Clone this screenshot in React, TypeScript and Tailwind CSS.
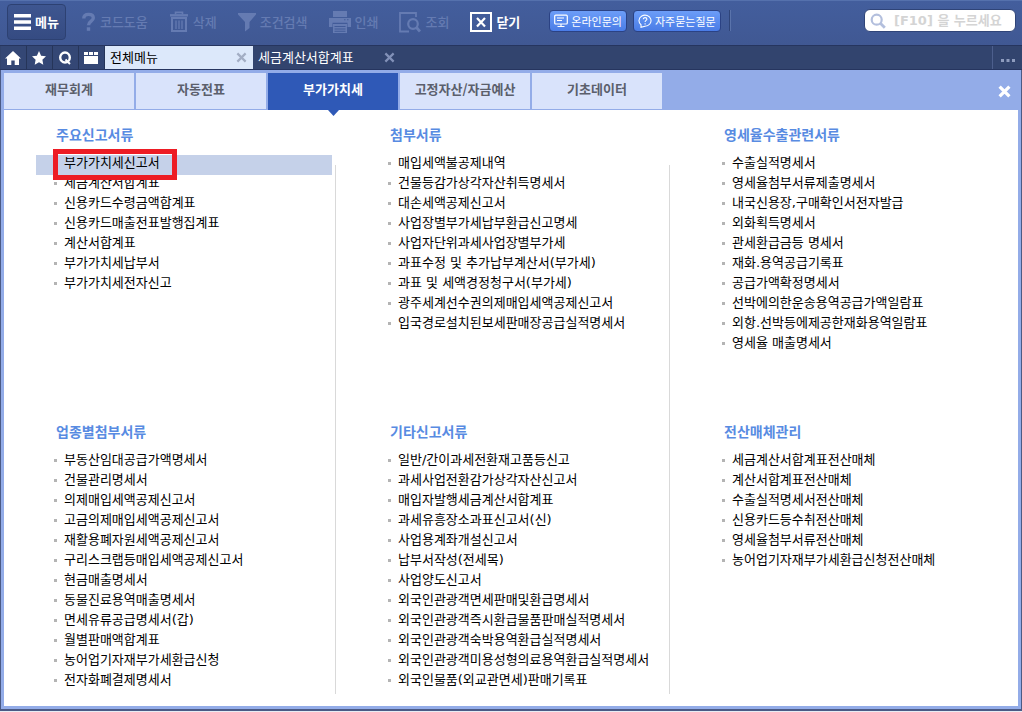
import { ReactNode } from "react";

type MenuSection = { title: string; items: string[] };

const upper: MenuSection[] = [
  {
    title: "주요신고서류",
    items: [
      "부가가치세신고서",
      "세금계산서합계표",
      "신용카드수령금액합계표",
      "신용카드매출전표발행집계표",
      "계산서합계표",
      "부가가치세납부서",
      "부가가치세전자신고",
    ],
  },
  {
    title: "첨부서류",
    items: [
      "매입세액불공제내역",
      "건물등감가상각자산취득명세서",
      "대손세액공제신고서",
      "사업장별부가세납부환급신고명세",
      "사업자단위과세사업장별부가세",
      "과표수정 및 추가납부계산서(부가세)",
      "과표 및 세액경정청구서(부가세)",
      "광주세계선수권의제매입세액공제신고서",
      "입국경로설치된보세판매장공급실적명세서",
    ],
  },
  {
    title: "영세율수출관련서류",
    items: [
      "수출실적명세서",
      "영세율첨부서류제출명세서",
      "내국신용장,구매확인서전자발급",
      "외화획득명세서",
      "관세환급금등 명세서",
      "재화.용역공급기록표",
      "공급가액확정명세서",
      "선박에의한운송용역공급가액일람표",
      "외항.선박등에제공한재화용역일람표",
      "영세율 매출명세서",
    ],
  },
];

const lower: MenuSection[] = [
  {
    title: "업종별첨부서류",
    items: [
      "부동산임대공급가액명세서",
      "건물관리명세서",
      "의제매입세액공제신고서",
      "고금의제매입세액공제신고서",
      "재활용폐자원세액공제신고서",
      "구리스크랩등매입세액공제신고서",
      "현금매출명세서",
      "동물진료용역매출명세서",
      "면세유류공급명세서(갑)",
      "월별판매액합계표",
      "농어업기자재부가세환급신청",
      "전자화폐결제명세서",
    ],
  },
  {
    title: "기타신고서류",
    items: [
      "일반/간이과세전환재고품등신고",
      "과세사업전환감가상각자산신고서",
      "매입자발행세금계산서합계표",
      "과세유흥장소과표신고서(신)",
      "사업용계좌개설신고서",
      "납부서작성(전세목)",
      "사업양도신고서",
      "외국인관광객면세판매및환급명세서",
      "외국인관광객즉시환급물품판매실적명세서",
      "외국인관광객숙박용역환급실적명세서",
      "외국인관광객미용성형의료용역환급실적명세서",
      "외국인물품(외교관면세)판매기록표",
    ],
  },
  {
    title: "전산매체관리",
    items: [
      "세금계산서합계표전산매체",
      "계산서합계표전산매체",
      "수출실적명세서전산매체",
      "신용카드등수취전산매체",
      "영세율첨부서류전산매체",
      "농어업기자재부가세환급신청전산매체",
    ],
  },
];

const categories = ["재무회계", "자동전표", "부가가치세", "고정자산/자금예산", "기초데이터"];
const ACTIVE_CATEGORY = "부가가치세";

function CrossIcon({ className, size, stroke }: { className: string; size: number; stroke: number }) {
  return (
    <svg width={size} height={size} viewBox="0 0 12 12" className={className} fill="none" stroke="currentColor" strokeWidth={stroke}>
      <path d="M1.5 1.5 10.5 10.5M10.5 1.5 1.5 10.5" />
    </svg>
  );
}

function HelpIcon() {
  return (
    <svg width="14" height="20" viewBox="0 0 14 20" fill="none" stroke="currentColor" strokeWidth="3.4">
      <path d="M1.800 6.500C1.800 3.400 4 2.400 6.700 2.400c3 0 4.600 1.300 4.600 3.600C11.300 9.200 6.500 9 6.500 13.300" />
      <path d="M6.500 15.300v3.500" />
    </svg>
  );
}

function TrashIcon() {
  return (
    <svg width="20" height="22" viewBox="0 0 20 22" fill="none" stroke="currentColor">
      <path d="M1 4.300h18" strokeWidth="2.400" />
      <path d="M6.500 3.300V1.400h7v2" strokeWidth="1.600" />
      <path d="M3 7v13h14V7z" strokeWidth="2" />
      <path d="M7 9.500v8.500M10 9.500v8.500M13 9.500v8.500" strokeWidth="1.300" />
    </svg>
  );
}

function FilterIcon() {
  return (
    <svg width="18" height="19" viewBox="0 0 18 19" fill="currentColor">
      <path d="M0 0h18v1.500L11.500 9v6L7 18.500V9L0 1.500z" />
    </svg>
  );
}

function PrintIcon() {
  return (
    <svg width="22" height="22" viewBox="0 0 22 22" fill="currentColor">
      <path d="M4 0h14v6H4z" />
      <path d="M0 7h22v9h-3.500v-4.300h-15V16H0zm15 1.300v1h1.500v-1zm3 0v1h1.500v-1z" fillRule="evenodd" />
      <path d="M4 13h14v9H4zm1.500 2v1h11v-1zm0 2.500v1h11v-1zm0 2.300v.9h11v-.9z" fillRule="evenodd" />
    </svg>
  );
}

function LookupIcon() {
  return (
    <svg width="22" height="21" viewBox="0 0 22 21" fill="none" stroke="currentColor">
      <path d="M17 5V1H1v18.500h9" strokeWidth="1.800" />
      <circle cx="14" cy="12" r="4.800" strokeWidth="2.200" />
      <path d="m17.500 15.500 3.500 4" strokeWidth="2.800" />
    </svg>
  );
}

function CloseBoxIcon() {
  return (
    <svg width="22" height="20" viewBox="0 0 22 20" fill="none" stroke="currentColor" strokeWidth="2">
      <path d="M1 1h20v18H1z" />
      <path d="m7 6 8 8.500M15 6l-8 8.500" strokeWidth="2.200" />
    </svg>
  );
}

function ToolButton({ icon, label, enabled }: { icon: ReactNode; label: string; enabled?: boolean }) {
  return (
    <button
      type="button"
      disabled={!enabled}
      className={
        enabled
          ? "flex h-9 items-center gap-1 font-bold text-white"
          : "flex h-9 items-center gap-1 font-medium text-[#657bb2]"
      }
    >
      {icon}
      {label}
    </button>
  );
}

function PillButton({ icon, label }: { icon: ReactNode; label: string }) {
  return (
    <button
      type="button"
      className="flex h-[22px] items-center gap-[3px] rounded border border-[#2b4284] bg-linear-to-b from-[#6c9df8] to-[#4a7ce6] px-1 text-[11px] leading-5 text-white"
    >
      {icon}
      {label}
    </button>
  );
}

function Toolbar() {
  return (
    <header className="flex h-[45px] items-start border-t border-[#5571ad] bg-linear-to-b from-[#435e9d] to-[#405893] pt-[3px] pr-[6px] pl-[7px] text-[13px]">
      <button
        type="button"
        className="flex h-9 items-center gap-1 rounded border border-[#2d4172] bg-linear-to-b from-[#3e5690] to-[#354b82] px-[6px] font-bold text-white"
      >
        <svg width="17" height="16" viewBox="0 0 17 16" fill="currentColor">
          <path d="M0 0h17v3.500H0zM0 6.200h17v3.500H0zM0 12.400h17v3.500H0z" />
        </svg>
        메뉴
      </button>
      <div className="ml-4 flex gap-[21px]">
        <ToolButton icon={<HelpIcon />} label="코드도움" />
        <ToolButton icon={<TrashIcon />} label="삭제" />
        <ToolButton icon={<FilterIcon />} label="조건검색" />
        <ToolButton icon={<PrintIcon />} label="인쇄" />
        <ToolButton icon={<LookupIcon />} label="조회" />
        <ToolButton icon={<CloseBoxIcon />} label="닫기" enabled />
      </div>
      <div className="mt-[6px] ml-[29px] flex gap-[6px]">
        <PillButton
          label="온라인문의"
          icon={
            <svg width="14" height="14" viewBox="0 0 14 14" fill="none" stroke="currentColor" strokeWidth="1.200">
              <rect x="0.700" y="1.200" width="12.600" height="8.800" rx="1" />
              <path d="M3 4h7M3 6.500h5M7 10v2M3.500 12.500h7" />
            </svg>
          }
        />
        <PillButton
          label="자주묻는질문"
          icon={
            <svg width="14" height="14" viewBox="0 0 14 14" fill="none" stroke="currentColor" strokeWidth="1.100">
              <path d="M3 10.800A6 5.500 0 1 1 7 12.200L3 13.300z" />
              <path d="M5.300 5.200c0-2.200 3.600-2.100 3.600 0C8.900 6.400 7.100 6.500 7.100 8M7.100 9.200v1.200" />
            </svg>
          }
        />
        <div className="ml-[2px] h-[21px] w-[2px] border-l border-[#2f4478] bg-[#5a73ab]" />
      </div>
      <label className="mt-[5px] ml-auto flex h-[23px] w-[152px] items-center gap-2 rounded-md border border-[#2f4478] bg-white pl-[5px] text-[#b3bfdd]">
        <svg width="16" height="16" viewBox="0 0 16 16" className="shrink-0" fill="none" stroke="currentColor" strokeWidth="2.200">
          <circle cx="6.700" cy="6.700" r="5" />
          <path d="m10.300 10.300 4.500 4.500" strokeWidth="2.800" />
        </svg>
        <input
          type="search"
          aria-label="검색"
          placeholder="[F10] 을 누르세요"
          className="w-full min-w-0 bg-transparent font-['DejaVu_Sans','Noto_Sans_CJK_KR',sans-serif] text-[13px] font-bold text-gray-700 outline-none placeholder:text-[#d4d4d4]"
        />
      </label>
    </header>
  );
}

function IconCell({ label, children }: { label: string; children: ReactNode }) {
  return (
    <button
      type="button"
      aria-label={label}
      className="flex w-[26px] items-center justify-center border-r border-[#263559] bg-[#344775] pr-px text-white"
    >
      {children}
    </button>
  );
}

function WindowTabs() {
  return (
    <nav className="flex h-[25px] border-t border-b border-[#26355f] bg-[#32446e] pl-px text-[13px]">
      <IconCell label="홈">
        <svg width="16" height="14" viewBox="0 0 16 14" fill="currentColor">
          <path d="M8 0 16 7.500h-2V14H9.700V9.500H6.300V14H2V7.500H0z" />
        </svg>
      </IconCell>
      <IconCell label="즐겨찾기">
        <svg width="14" height="14" viewBox="0 0 14 14" fill="currentColor">
          <path d="m7 0 2.100 4.700 4.900.6-3.600 3.400.9 5L7 11.200l-4.300 2.500.9-5L0 5.300l4.900-.6z" />
        </svg>
      </IconCell>
      <IconCell label="검색">
        <svg width="14" height="14" viewBox="0 0 14 14" fill="none" stroke="currentColor" strokeWidth="2.400">
          <ellipse cx="7" cy="6.500" rx="4.800" ry="5" />
          <path d="m7.500 8.500 4.500 4.500" strokeWidth="2" />
        </svg>
      </IconCell>
      <IconCell label="달력">
        <svg width="14" height="12" viewBox="0 0 14 12" fill="currentColor">
          <path d="M0 0h4v3H0zM5 0h4v3H5zM10 0h4v3h-4zM0 4h14v8H0z" />
        </svg>
      </IconCell>
      <div className="flex w-[148px] items-center justify-between bg-[#dce8fa] pr-[6px] pb-px pl-[5px] text-black">
        <a href="#all">전체메뉴</a>
        <button type="button" aria-label="전체메뉴 닫기" className="pt-px">
          <CrossIcon size={11} stroke={2.4} className="text-[#a3aec4]" />
        </button>
      </div>
      <div className="flex w-[148px] items-center justify-between pr-[6px] pb-px pl-[5px] text-white">
        <a href="#tax-invoice">세금계산서합계표</a>
        <button type="button" aria-label="세금계산서합계표 닫기" className="pt-px">
          <CrossIcon size={11} stroke={2.4} className="text-[#8291b8]" />
        </button>
      </div>
      <button
        type="button"
        aria-label="더보기"
        className="ml-auto flex w-[30px] items-center justify-center border-l border-[#4d5f8d] pt-[6px] text-[#8e9cbe]"
      >
        <svg width="14" height="3" viewBox="0 0 14 3" fill="currentColor">
          <path d="M0 0h3v3H0zM5.500 0h3v3h-3zM11 0h3v3h-3z" />
        </svg>
      </button>
    </nav>
  );
}

function CategoryTabs() {
  return (
    <div className="flex h-10 items-stretch justify-between bg-[#93ace8] pt-[3px]">
      <ul className="flex gap-[2px] text-[13px] font-bold">
        {categories.map((name) =>
          name === ACTIVE_CATEGORY ? (
            <li key={name} className="relative flex w-[130px] bg-[#2f59b7] text-white">
              <button type="button" className="w-full pb-[5px]">
                {name}
              </button>
              <svg width="11" height="6" viewBox="0 0 11 6" className="absolute top-full left-[60px]" fill="#2f59b7">
                <path d="M0 0h11L5.500 6z" />
              </svg>
            </li>
          ) : (
            <li key={name} className="mb-px flex w-[130px] bg-[#d9e3fb] text-[#5b5f6c]">
              <button type="button" className="w-full pb-1">
                {name}
              </button>
            </li>
          ),
        )}
      </ul>
      <button type="button" aria-label="메뉴 닫기" className="mr-[7px]">
        <CrossIcon size={13} stroke={3} className="text-white" />
      </button>
    </div>
  );
}

function Section({ section, selected, first }: { section: MenuSection; selected?: string; first?: boolean }) {
  return (
    <section className={first ? "pl-8" : "pl-[34px]"}>
      <h2 className="pl-5 text-[14px] leading-5 font-bold text-[#588be2]">{section.title}</h2>
      <ul className="mt-[11px] mr-[3px] font-['DejaVu_Sans','Noto_Sans_CJK_KR',sans-serif] text-[13px] leading-4 text-black">
        {section.items.map((item) => (
          <li
            key={item}
            className={
              item === selected
                ? "relative flex h-5 items-start bg-[#c5d1e9] pl-[18px]"
                : "relative flex h-5 items-start pl-[18px]"
            }
          >
            <span className="mt-[7px] mr-[7px] size-[3px] shrink-0 bg-[#b4b4b4]" />
            <a href="#item" className="whitespace-nowrap">
              {item}
            </a>
            {item === selected && (
              <span className="pointer-events-none absolute -top-[6px] left-[17px] z-10 h-[31px] w-[124px] border-5 border-[#ed1c24]" />
            )}
          </li>
        ))}
      </ul>
    </section>
  );
}

function Divider() {
  return <div className="row-span-2 mt-[41px] mb-3 bg-[#d9d9d9]" />;
}

export default function App() {
  return (
    <div className="flex min-h-screen flex-col bg-[#e8ecf4] pb-px font-['Noto_Sans_CJK_KR',sans-serif]">
      <Toolbar />
      <WindowTabs />
      <main className="flex flex-1 flex-col border-r border-b-2 border-l border-[#4b5a85]">
        <div className="flex flex-1 flex-col border-x-[3px] border-b-[3px] border-[#93ace8] bg-white">
          <CategoryTabs />
          <div className="grid flex-1 grid-cols-[331fr_1px_333fr_1px_348fr] grid-rows-[297px_auto] pt-[14px]">
            <Section section={upper[0]} selected="부가가치세신고서" first />
            <Divider />
            <Section section={upper[1]} />
            <Divider />
            <Section section={upper[2]} />
            <Section section={lower[0]} first />
            <Section section={lower[1]} />
            <Section section={lower[2]} />
          </div>
        </div>
      </main>
    </div>
  );
}
